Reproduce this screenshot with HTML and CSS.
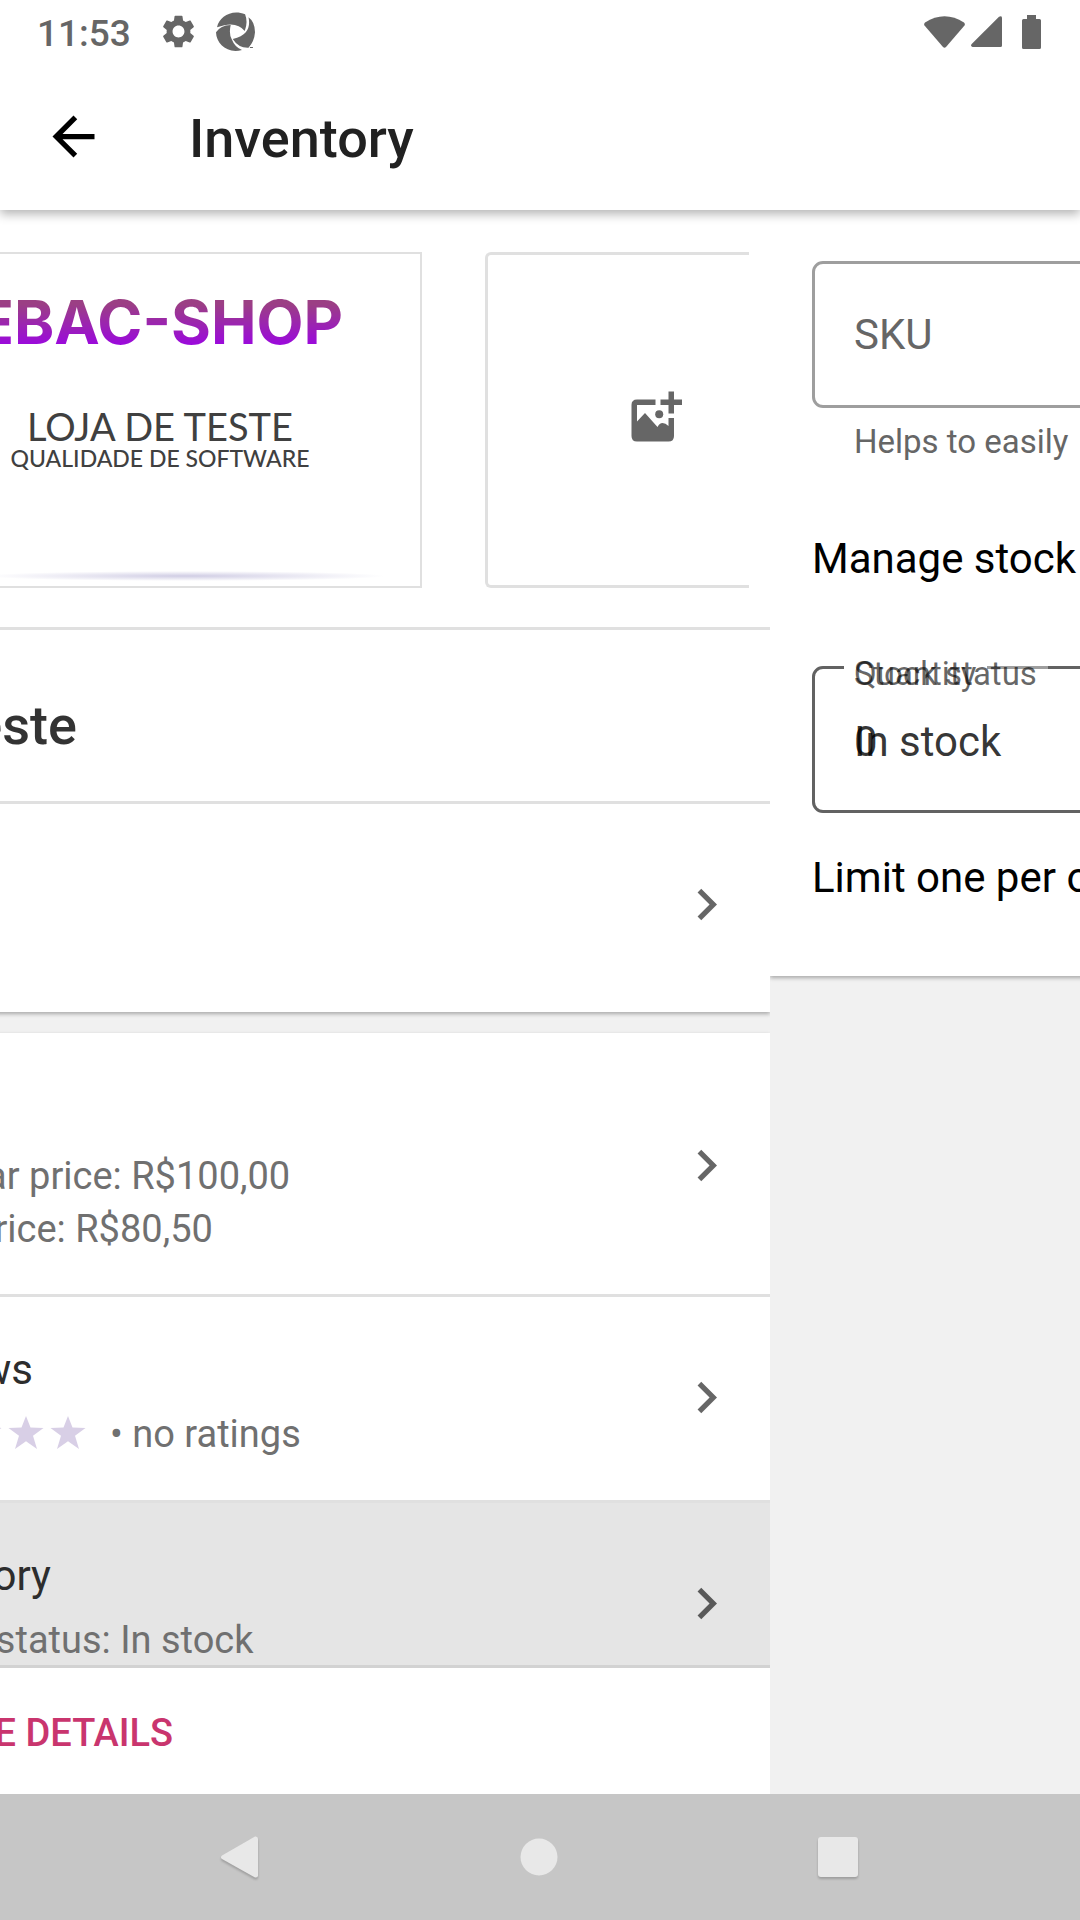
FILE: index.html
```html
<!DOCTYPE html>
<html lang="en">
<head>
<meta charset="utf-8">
<meta name="viewport" content="width=device-width, initial-scale=1">
<title>Inventory</title>
<link rel="stylesheet" href="styles.css">
</head>
<body>
<header class="top">
  <div class="status">
    <time class="clock">11:53</time>
    <svg class="gear" viewBox="2.4 2 19.2 20" aria-hidden="true"><path d="M19.14 12.94c.04-.3.06-.61.06-.94 0-.32-.02-.64-.07-.94l2.03-1.58c.18-.14.23-.41.12-.61l-1.92-3.32c-.12-.22-.37-.29-.59-.22l-2.39.96c-.5-.38-1.03-.7-1.62-.94l-.36-2.54c-.04-.24-.24-.41-.48-.41h-3.84c-.24 0-.43.17-.47.41l-.36 2.54c-.59.24-1.13.57-1.62.94l-2.39-.96c-.22-.08-.47 0-.59.22L2.74 8.87c-.12.21-.08.47.12.61l2.03 1.58c-.05.3-.09.63-.09.94s.02.64.07.94l-2.03 1.58c-.18.14-.23.41-.12.61l1.92 3.32c.12.22.37.29.59.22l2.39-.96c.5.38 1.03.7 1.62.94l.36 2.54c.05.24.24.41.48.41h3.84c.24 0 .44-.17.47-.41l.36-2.54c.59-.24 1.13-.56 1.62-.94l2.39.96c.22.08.47 0 .59-.22l1.92-3.32c.12-.22.07-.47-.12-.61l-2.01-1.58zM12 15.6c-1.98 0-3.6-1.62-3.6-3.6s1.62-3.6 3.6-3.6 3.6 1.62 3.6 3.6-1.62 3.6-3.6 3.6z"/></svg>
    <svg class="swirl" viewBox="627 36 114 117" preserveAspectRatio="none" aria-hidden="true"><path d="M630 82C636 50 674 26 712 43Q721 66 711 93Q686 60 630 82ZM722 52Q741 66 741 97Q739 125 722 143Q692 144 676 117Q703 111 714 97Q728 80 722 52ZM627 97Q640 76 670 75Q664 101 673 118Q682 142 703 150C660 162 628 132 627 97ZM726 141h9v3h-9Z"/></svg>
    <span class="grow"></span>
    <svg class="wifi" viewBox="0 0 41 32" aria-hidden="true"><path d="M1 6.500Q20.500-6 40 6.500Q41.500 8 40.500 9.500L22 31Q20.500 32.500 19 31L.5 9.500Q-.5 8 1 6.500Z"/></svg>
    <svg class="signal" viewBox="0 0 31 31" aria-hidden="true"><path d="M31 1.500V29.500Q31 31 29.500 31H1.500Q-1 30 .7 28L28 .7Q30.500-.7 31 1.500Z"/></svg>
    <svg class="battery" viewBox="0 0 19 34" aria-hidden="true"><path d="M5 0h9v4h3.500Q19 4 19 5.500v27Q19 34 17.500 34h-16Q0 34 0 32.500v-27Q0 4 1.500 4H5Z"/></svg>
  </div>
  <div class="toolbar">
    <button class="back" type="button" aria-label="Back"><svg class="icon" viewBox="0 0 24 24"><path d="M20 11H7.830l5.590-5.590L12 4l-8 8 8 8 1.410-1.410L7.830 13H20z"/></svg></button>
    <h1 class="title">Inventory</h1>
  </div>
</header>

<main class="panes">
  <section class="pane pane-product" aria-label="Product">
    <div class="screen product">
      <div class="scroll">
        <div class="card">
          <div class="gallery">
            <div class="photo">
              <span class="brand">EBAC-SHOP</span>
              <span class="shop">LOJA DE TESTE</span>
              <span class="motto">QUALIDADE DE SOFTWARE</span>
              <span class="shade"></span>
            </div>
            <button class="add-photo" type="button" aria-label="Add photo">
              <svg class="icon" viewBox="0 0 63 63"><g transform="translate(9.500 2.500)"><path d="M24 8H5.500Q0 8 0 13.500V44.500Q0 50 5.500 50H37Q42.500 50 42.500 44.500V26.500H37V34.500Q34 31.500 31 31.500Q28 31.500 26 35.500L13.500 21.500L5.500 30V13.500H24ZM37 0h5.500V8H50.500v5.500H42.500V22H37V13.500H29V8H37Z"/><circle cx="27.700" cy="22.700" r="4"/></g></svg>
            </button>
          </div>
          <h2 class="name">Produto teste</h2>
          <a class="row row-description" href="#description" aria-label="Description">
            <span class="row-text"></span>
            <svg class="icon" viewBox="0 0 24 24"><path d="M10 6L8.590 7.410 13.170 12l-4.580 4.590L10 18l6-6z"/></svg>
          </a>
        </div>
        <div class="card">
          <a class="row row-price" href="#price">
            <span class="row-text">
              <span class="detail">Regular price: R$100,00</span>
              <span class="detail">Sale price: R$80,50</span>
            </span>
            <svg class="icon" viewBox="0 0 24 24"><path d="M10 6L8.590 7.410 13.170 12l-4.580 4.590L10 18l6-6z"/></svg>
          </a>
          <a class="row" href="#reviews">
            <span class="row-text">
              <span class="row-title">Reviews</span>
              <span class="rating">
                <svg class="stars" viewBox="0 0 210 42" aria-hidden="true"><path id="star" d="M21 2L25.500 13.600L38.500 13.900L28 21.700L32 35L21 27.300L10 35L14 21.700L3.500 13.900L16.500 13.600Z"/><use href="#star" x="42"/><use href="#star" x="84"/><use href="#star" x="126"/><use href="#star" x="168"/></svg>
                <span>• no ratings</span>
              </span>
            </span>
            <svg class="icon" viewBox="0 0 24 24"><path d="M10 6L8.590 7.410 13.170 12l-4.580 4.590L10 18l6-6z"/></svg>
          </a>
          <a class="row row-pressed" href="#inventory">
            <span class="row-text">
              <span class="row-title">Inventory</span>
              <span class="detail">Stock status: In stock</span>
            </span>
            <svg class="icon" viewBox="0 0 24 24"><path d="M10 6L8.590 7.410 13.170 12l-4.580 4.590L10 18l6-6z"/></svg>
          </a>
        </div>
      </div>
      <div class="footer"><button class="more" type="button">ADD MORE DETAILS</button></div>
    </div>
  </section>

  <section class="pane pane-inventory" aria-label="Inventory settings">
    <form class="screen inventory">
      <input class="sku" type="text" placeholder="SKU" aria-label="SKU" aria-describedby="sku-help">
      <p class="help" id="sku-help">Helps to easily</p>
      <p class="setting">Manage stock</p>
      <div class="stack">
        <fieldset class="field">
          <legend><label for="quantity">Quantity</label></legend>
          <input class="control" id="quantity" type="text" inputmode="numeric" value="0">
        </fieldset>
        <fieldset class="field">
          <legend><label for="stock">Stock status</label></legend>
          <select class="control" id="stock"><option>In stock</option></select>
        </fieldset>
      </div>
      <p class="setting">Limit one per order</p>
    </form>
  </section>
</main>

<nav class="nav" aria-label="System">
  <button type="button" aria-label="Back"><svg class="nav-icon" viewBox="0 0 42 42"><path d="M3 19.500L36 .5Q39 0 39 3V39.500Q39 42 36 41.500L3 23Q1 21 3 19.500Z"/></svg></button>
  <button type="button" aria-label="Home"><svg class="nav-icon flat" viewBox="0 0 42 42"><circle cx="21" cy="21" r="18.500"/></svg></button>
  <button type="button" aria-label="Recent apps"><svg class="nav-icon" viewBox="0 0 42 42"><rect x="1" y="1" width="40" height="40" rx="3"/></svg></button>
</nav>
</body>
</html>
```
FILE: styles.css
```css
* { box-sizing: border-box; }

body {
  margin: 0;
  height: 100vh;
  display: flex;
  flex-direction: column;
  overflow: hidden;
  background: #f1f1f1;
  color: #212121;
  font-family: Roboto, "Noto Sans", sans-serif;
  font-size: 42px;
  line-height: 49px;
}

h1, h2, p { margin: 0; font-weight: 400; }

button {
  margin: 0;
  padding: 0;
  border: 0;
  background: none;
  color: inherit;
  font: inherit;
}

a { color: inherit; text-decoration: none; }
svg { display: block; flex: none; }

.icon { width: 63px; height: 63px; fill: #666; }
.grow { flex: 1; }

/* Status bar and toolbar */
.top {
  position: relative;
  z-index: 1;
  flex: none;
  background: #fff;
  box-shadow: 0 4px 10px rgba(0, 0, 0, .3);
}

.status {
  height: 63px;
  padding: 0 39px 0 37px;
  display: flex;
  align-items: center;
  fill: #666;
}

.clock { padding-top: 4px; color: #666; font-size: 37px; font-weight: 500; line-height: 59px; }
.gear { width: 33px; height: 33px; margin-left: 31px; }
.swirl { width: 39px; height: 39px; margin-left: 21px; }
.wifi { width: 41px; height: 32px; }
.signal { width: 31px; height: 31px; margin-left: 6px; }
.battery { width: 19px; height: 34px; margin-left: 20px; }

.toolbar { height: 147px; padding: 0 42px; display: flex; align-items: center; gap: 84px; }
.toolbar .icon { fill: #000; }
.title { padding-top: 5px; font-size: 54px; font-weight: 500; line-height: 62px; }

/* Two screens sliding past each other */
.panes { flex: 1; min-height: 0; display: flex; }
.pane { display: flex; overflow: hidden; min-width: 0; }
.pane-product { flex: 770; justify-content: flex-end; }
.pane-inventory { flex: 310; align-items: flex-start; }
.screen { flex: none; width: 100vw; }

/* Product screen */
.product { display: flex; flex-direction: column; }
.scroll {
  flex: 1;
  min-height: 0;
  overflow: hidden;
  display: flex;
  flex-direction: column;
  gap: 21px;
}
.card { flex: none; background: #fff; box-shadow: 0 2px 4px rgba(0, 0, 0, .3); }

.gallery {
  margin-right: 21px;
  padding: 42px 0 39px;
  display: flex;
  justify-content: flex-end;
  gap: 63px;
  overflow: hidden;
}
.photo {
  flex: none;
  width: 524px;
  height: 336px;
  padding-top: 38px;
  display: flex;
  flex-direction: column;
  align-items: center;
  border: 2px solid #e0e0e0;
}
.brand {
  background: linear-gradient(#9b3f84 12px, #9b0adb 52px);
  background-clip: text;
  color: transparent;
  font-family: Inter, "Liberation Sans", sans-serif;
  font-size: 61px;
  font-weight: 700;
  line-height: 60px;
}
.shop, .motto { color: #404040; font-family: Lato, "Noto Sans", sans-serif; }
.shop { margin-top: 54px; font-size: 38px; line-height: 40px; }
.motto { font-size: 23px; font-weight: 500; line-height: 24px; }
.shade {
  width: 400px;
  height: 10px;
  margin: auto 0 5px 52px;
  background: radial-gradient(closest-side, #d0cde4, #fff);
}
.add-photo {
  flex: none;
  width: 264px;
  height: 336px;
  padding-left: 134px;
  border: 3px solid #e0e0e0;
  border-right: 0;
  border-radius: 6px 0 0 6px;
}

.name {
  padding: 65px 60px 44px;
  border: solid #e0e0e0;
  border-width: 3px 0;
  color: #333;
  font-size: 54px;
  font-weight: 500;
  line-height: 62px;
}

.row { padding: 48px 32px 39px 189px; display: flex; align-items: center; }
.row + .row { border-top: 3px solid #e0e0e0; }
.row-text { flex: 1; display: flex; flex-direction: column; }
.row-title { margin-bottom: 14px; color: #2d2d2d; }
.detail, .rating { color: #707070; font-size: 38px; line-height: 53px; }
.detail { margin-left: 12px; }
.row .icon { margin: -11px 0 0; }
.row-description { height: 208px; }
.row-description .icon { margin-top: -16px; }
.row-price { height: 261px; padding-top: 117px; }
.row-price .icon { margin-top: -74px; }
.row-pressed { background: #e5e5e5; }
.row-pressed .icon { fill: #595959; }
.rating { display: flex; align-items: center; gap: 21px; }
.stars { width: 210px; height: 42px; fill: #d8cfe6; }

.footer {
  flex: none;
  height: 129px;
  padding: 4px 137px 0;
  display: flex;
  align-items: center;
  border-top: 3px solid #d2d2d2;
  background: #fff;
}
.more { color: #c9356e; font-size: 38px; font-weight: 500; }

/* Inventory screen */
.inventory {
  padding: 51px 42px 74px;
  display: flex;
  flex-direction: column;
  background: #fff;
  box-shadow: 0 2px 4px rgba(0, 0, 0, .3);
}
.sku {
  height: 147px;
  margin: 0;
  padding: 0 39px;
  border: 3px solid #9e9e9e;
  border-radius: 11px;
  background: none;
  color: #212121;
  font: inherit;
}
.sku::placeholder { color: #666; opacity: 1; }
.help { margin: 15px 42px 73px; color: #666; font-size: 33px; line-height: 38px; }
.setting { color: #000; }

.stack { margin: 60px 0 40px; display: grid; }
.field {
  grid-area: 1 / 1;
  min-width: 0;
  margin: 0;
  padding: 0 0 20px;
  border: 3px solid rgba(0, 0, 0, .38);
  border-radius: 11px;
}
.field legend {
  margin-left: 29px;
  padding: 12px 11px 0 10px;
  color: rgba(0, 0, 0, .6);
  font-size: 33px;
  line-height: 37px;
}
.control {
  display: block;
  width: 100%;
  height: 98px;
  margin: 0;
  padding: 0 39px;
  border: 0;
  background: none;
  color: rgba(0, 0, 0, .8);
  font: inherit;
  appearance: none;
}

/* System navigation */
.nav { flex: none; height: 126px; padding: 0 93px 0 91px; display: flex; background: #c6c6c6; }
.nav button { flex: 1; display: flex; align-items: center; justify-content: center; }
.nav-icon { width: 42px; height: 42px; fill: #e8e8e8; filter: drop-shadow(0 2px 1px rgba(0, 0, 0, .2)); }
.flat { filter: none; }
```
